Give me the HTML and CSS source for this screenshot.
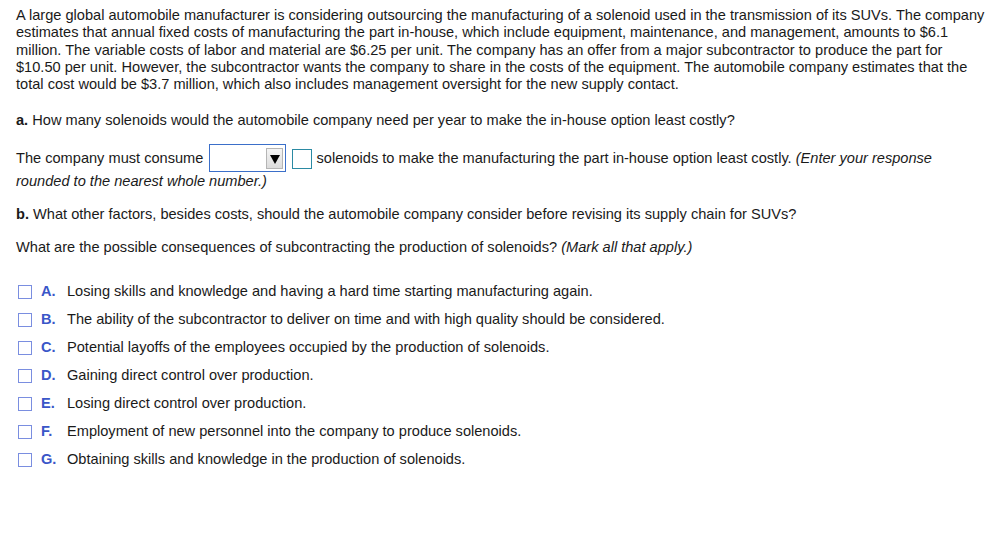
FILE: index.html
```html
<!DOCTYPE html>
<html>
<head>
<meta charset="utf-8">
<link rel="stylesheet" href="styles.css">
</head>
<body>
<div class="page">
  <p class="intro">A large global automobile manufacturer is considering outsourcing the manufacturing of a solenoid used in the transmission of its SUVs. The company estimates that annual fixed costs of manufacturing the part in-house, which include equipment, maintenance, and management, amounts to $6.1 million. The variable costs of labor and material are $6.25 per unit. The company has an offer from a major subcontractor to produce the part for $10.50 per unit. However, the subcontractor wants the company to share in the costs of the equipment. The automobile company estimates that the total cost would be $3.7 million, which also includes management oversight for the new supply contact.</p>
  <p class="q-a"><b>a.</b> How many solenoids would the automobile company need per year to make the in-house option least costly?</p>
  <p class="answer">The company must consume <span class="select"><span class="arrow"><svg width="10" height="10" viewBox="0 0 10 10"><path d="M0 1h10L5 10z" fill="#000"/></svg></span></span> <span class="input"></span> solenoids to make the manufacturing the part in-house option least costly. <i>(Enter your response rounded to the nearest whole number.)</i></p>
  <p class="q-b"><b>b.</b> What other factors, besides costs, should the automobile company consider before revising its supply chain for SUVs?</p>
  <p class="q-c">What are the possible consequences of subcontracting the production of solenoids? <i>(Mark all that apply.)</i></p>
  <ul class="options">
    <li><span class="box"></span><span class="letter">A.</span><span>Losing skills and knowledge and having a hard time starting manufacturing again.</span></li>
    <li><span class="box"></span><span class="letter">B.</span><span>The ability of the subcontractor to deliver on time and with high quality should be considered.</span></li>
    <li><span class="box"></span><span class="letter">C.</span><span>Potential layoffs of the employees occupied by the production of solenoids.</span></li>
    <li><span class="box"></span><span class="letter">D.</span><span>Gaining direct control over production.</span></li>
    <li><span class="box"></span><span class="letter">E.</span><span>Losing direct control over production.</span></li>
    <li><span class="box"></span><span class="letter">F.</span><span>Employment of new personnel into the company to produce solenoids.</span></li>
    <li><span class="box"></span><span class="letter">G.</span><span>Obtaining skills and knowledge in the production of solenoids.</span></li>
  </ul>
</div>
</body>
</html>
```
FILE: styles.css
```css
html, body {
  margin: 0;
  padding: 0;
  background: #fff;
}
body {
  font-family: "Liberation Sans", Arial, sans-serif;
  font-size: 14.6px;
  color: #1a1a1a;
}
.page {
  padding: 7px 14px 0 16px;
  width: 970px;
}
p {
  margin: 0;
  line-height: 17.3px;
}
.q-a {
  margin-top: 18.5px;
}
.answer {
  margin-top: 18px;
  line-height: 23px;
}
.select {
  display: inline-block;
  vertical-align: middle;
  width: 75px;
  height: 26px;
  border: 1px solid #3b6fc9;
  position: relative;
  margin: -6px 2px -4px 2px;
}
.arrow {
  position: absolute;
  right: 2px;
  top: 3px;
  width: 15px;
  height: 19px;
  background: linear-gradient(#f4f4f4, #dcdcdc);
  border: 1px solid #b5b5b5;
  display: flex;
  align-items: center;
  justify-content: center;
}
.input {
  display: inline-block;
  vertical-align: middle;
  width: 18px;
  height: 18px;
  border: 1px solid #2b8aa3;
  margin: -4px 0;
}
.q-b {
  margin-top: 13px;
}
.q-c {
  margin-top: 15px;
}
.options {
  list-style: none;
  margin: 22px 0 0 0;
  padding: 0;
}
.options li {
  display: flex;
  align-items: center;
  height: 28px;
  line-height: 17px;
}
.box {
  width: 12px;
  height: 12px;
  border: 1px solid #7a8ee0;
  margin-left: 2px;
  margin-right: 9px;
  flex: none;
}
.letter {
  width: 26px;
  flex: none;
  font-weight: bold;
  color: #3a56c8;
}
```
